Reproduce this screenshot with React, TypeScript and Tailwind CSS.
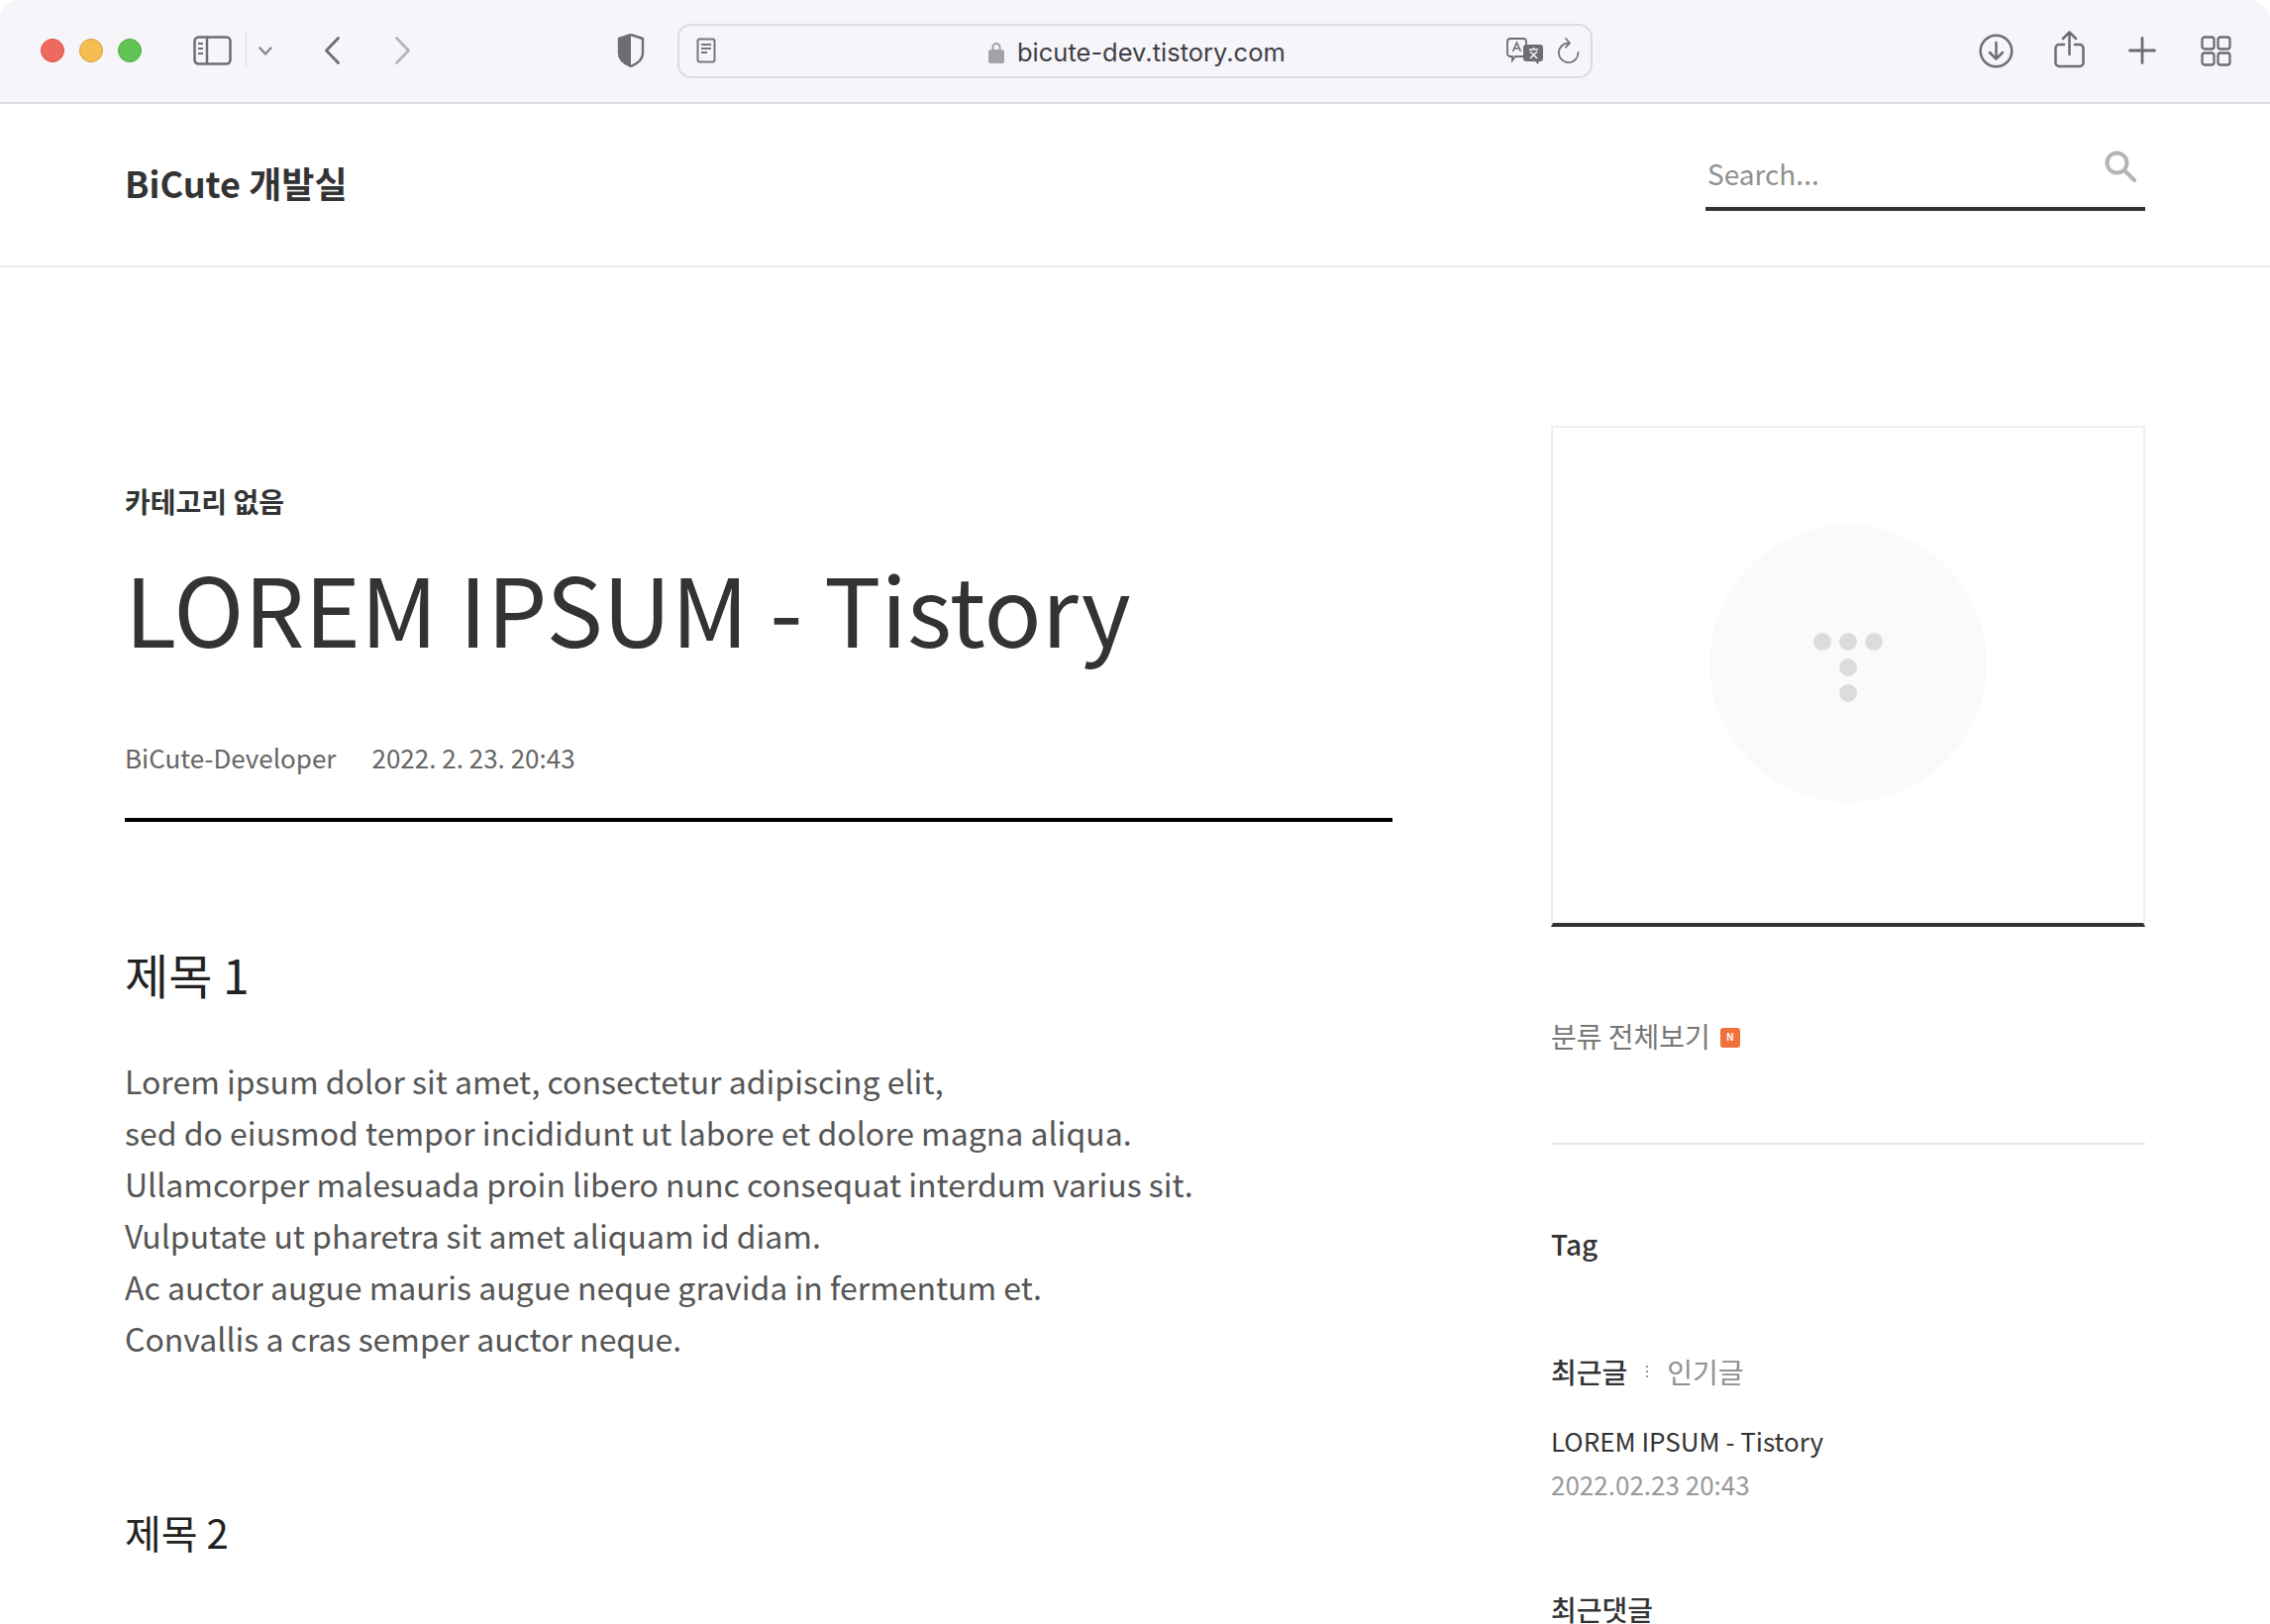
const kr = "font-['Noto_Sans_CJK_KR','Noto_Sans',sans-serif]";

function Toolbar() {
  return (
    <div className="relative flex h-[105px] shrink-0 items-center rounded-t-[20px] border-b-2 border-[#dcdbde] bg-[#f6f5fa] pb-[1px] pl-[41px] pr-[39px]">
      <div className="flex gap-[15px]">
        <span className="h-[24px] w-[24px] rounded-full border border-[#d9534a] bg-[#ee6a5f]" />
        <span className="h-[24px] w-[24px] rounded-full border border-[#dba13a] bg-[#f5bd4f]" />
        <span className="h-[24px] w-[24px] rounded-full border border-[#4fae43] bg-[#61c454]" />
      </div>
      <svg className="ml-[52px]" width="39" height="30" viewBox="0 0 39 30" fill="none" stroke="#6e6d72" strokeWidth="2.5">
        <rect x="1.5" y="1.5" width="36" height="27" rx="4" />
        <path d="M14 2v26" />
        <path d="M5 8h5M5 13h5M5 18h5" strokeWidth="2" stroke="#6e6d72" />
      </svg>
      <span className="ml-[14px] h-[36px] w-[1px] bg-[#dedde2]" />
      <svg className="ml-[12px]" width="14" height="9" viewBox="0 0 14 9" fill="none" stroke="#8a898e" strokeWidth="2.4" strokeLinecap="round" strokeLinejoin="round">
        <path d="M1.5 1.5 7 7.5l5.5-6" />
      </svg>
      <svg className="ml-[53px]" width="15" height="28" viewBox="0 0 15 28" fill="none" stroke="#6e6d72" strokeWidth="2.8" strokeLinecap="round" strokeLinejoin="round">
        <path d="M13.5 1.5 1.5 14l12 12.5" />
      </svg>
      <svg className="ml-[56px]" width="15" height="28" viewBox="0 0 15 28" fill="none" stroke="#b6b5ba" strokeWidth="2.8" strokeLinecap="round" strokeLinejoin="round">
        <path d="M1.5 1.5 13.5 14l-12 12.5" />
      </svg>
      <svg className="ml-[209px]" width="28" height="34" viewBox="0 0 28 34" fill="none">
        <path d="M14 1 2 5v15c0 6 6 10.500 12 13 6-2.500 12-7 12-13V5z" fill="#f6f5fa" stroke="#6e6d72" strokeWidth="2.4" strokeLinejoin="round" />
        <path d="M14 1 2 5v15c0 6 6 10.500 12 13z" fill="#6e6d72" />
      </svg>
      <div className="ml-[33px] flex h-[55px] w-[924px] items-center rounded-[14px] border-2 border-[#dcdbe0] pl-[17px] pr-[11px]">
        <svg width="20" height="26" viewBox="0 0 20 26" fill="none" stroke="#77767b" strokeWidth="2">
          <rect x="1.500" y="1.500" width="17" height="23" rx="2" />
          <path d="M5 7h10M5 11h10M5 15h6" />
        </svg>
        <div className="ml-[275px] flex items-center gap-[13px] pt-[3px]">
          <svg width="16" height="23" viewBox="0 0 16 23" fill="#a3a2a7">
            <path d="M3.500 10V6.500a4.500 4.500 0 0 1 9 0V10h-2V6.500a2.500 2.500 0 0 0-5 0V10z" />
            <rect x="0" y="9" width="16" height="14" rx="2.500" />
          </svg>
          <span className="font-['Inter',sans-serif] text-[25.5px] leading-[30px] text-[#3f3f42]">bicute-dev.tistory.com</span>
        </div>
        <svg className="ml-auto" width="37" height="27" viewBox="0 0 37 27" fill="none">
          <path d="M4 1h13a3 3 0 0 1 3 3v12a3 3 0 0 1-3 3H9l-3 4v-4H4a3 3 0 0 1-3-3V4a3 3 0 0 1 3-3z" stroke="#6e6d72" strokeWidth="1.800" />
          <path d="M6.500 14 10.500 5l4 9M8 11h5" stroke="#6e6d72" strokeWidth="1.600" />
          <path d="M20 7h14a3 3 0 0 1 3 3v11a3 3 0 0 1-3 3h-1l-1 3-3-3h-9a3 3 0 0 1-3-3V10a3 3 0 0 1 3-3z" fill="#6e6d72" />
          <path d="M23 12h9M27.500 10v2M24 21l7-7M24 14l7 7" stroke="#f6f5fa" strokeWidth="1.500" />
        </svg>
        <svg className="ml-[14px]" width="23" height="26" viewBox="0 0 23 26" fill="none" stroke="#77767b" strokeWidth="1.800" strokeLinecap="round" strokeLinejoin="round">
          <path d="M12 5.500A9.800 9.800 0 1 0 21.500 15M9 1l4 4.500-4 4" />
        </svg>
      </div>
      <div className="ml-auto flex items-center">
        <svg width="35" height="35" viewBox="0 0 35 35" fill="none" stroke="#6e6d72" strokeWidth="2.500" strokeLinecap="round" strokeLinejoin="round">
          <circle cx="17.500" cy="17.500" r="15.800" />
          <path d="M17.500 9v16M11 19l6.500 6.500L24 19" />
        </svg>
        <svg className="ml-[41px] -mt-[3px]" width="31" height="38" viewBox="0 0 31 38" fill="none" stroke="#6e6d72" strokeWidth="2.500" strokeLinecap="round" strokeLinejoin="round">
          <path d="M15.500 24V2M9 8l6.500-6.500L22 8" />
          <path d="M10 14H5a3.500 3.500 0 0 0-3.500 3.500v15A3.500 3.500 0 0 0 5 36h21a3.500 3.500 0 0 0 3.500-3.500v-15A3.500 3.500 0 0 0 26 14h-5" />
        </svg>
        <svg className="ml-[44px]" width="28" height="28" viewBox="0 0 28 28" fill="none" stroke="#6e6d72" strokeWidth="2.800" strokeLinecap="round">
          <path d="M14 1.500v25M1.500 14h25" />
        </svg>
        <svg className="ml-[45px]" width="31" height="31" viewBox="0 0 31 31" fill="none" stroke="#6e6d72" strokeWidth="2.300">
          <rect x="1.500" y="1.500" width="12" height="12" rx="2.500" />
          <rect x="17.500" y="1.500" width="12" height="12" rx="2.500" />
          <rect x="1.500" y="17.500" width="12" height="12" rx="2.500" />
          <rect x="17.500" y="17.500" width="12" height="12" rx="2.500" />
        </svg>
      </div>
    </div>
  );
}

function SiteHeader() {
  return (
    <header className="flex h-[165px] shrink-0 items-start justify-between border-b-2 border-[#eeeeee] px-[126px]">
      <h1 className="mt-[54px] text-[36px] font-bold leading-[50px] text-[#333333]">BiCute 개발실</h1>
      <div className="relative mt-[28px] flex h-[80px] w-[444px] items-center border-b-4 border-[#333333] pl-[2px] pt-[8px]">
        <span className="text-[28px] font-normal text-[#909090]">Search...</span>
        <svg className="absolute right-[9px] top-[19px]" width="32" height="32" viewBox="0 0 32 32" fill="none" stroke="#b4b4b4" strokeWidth="4" strokeLinecap="round">
          <circle cx="12.500" cy="12.500" r="10" />
          <path d="M20 20l10 10" />
        </svg>
      </div>
    </header>
  );
}

function Article() {
  const lines = [
    "Lorem ipsum dolor sit amet, consectetur adipiscing elit,",
    "sed do eiusmod tempor incididunt ut labore et dolore magna aliqua.",
    "Ullamcorper malesuada proin libero nunc consequat interdum varius sit.",
    "Vulputate ut pharetra sit amet aliquam id diam.",
    "Ac auctor augue mauris augue neque gravida in fermentum et.",
    "Convallis a cras semper auctor neque.",
  ];
  return (
    <main className="w-[1280px] pt-[216px]">
      <p className="text-[28px] font-bold leading-[40px] text-[#333333]">카테고리 없음</p>
      <h2 className="mt-[17px] text-[96px] font-normal leading-[140px] text-[#333333]">LOREM IPSUM - Tistory</h2>
      <div className="mt-[62px] flex gap-[36px] border-b-4 border-black pb-[41px] text-[26px] font-normal leading-[40px] text-[#666666]">
        <span>BiCute-Developer</span>
        <span>2022. 2. 23. 20:43</span>
      </div>
      <h3 className="mt-[118px] text-[48px] font-normal leading-[70px] text-[#222222]">제목 1</h3>
      <div className="mt-[47px] text-[32px] font-normal leading-[52px] text-[#555555]">
        {lines.map((line) => (
          <p key={line}>{line}</p>
        ))}
      </div>
      <h3 className="mt-[140px] text-[40px] font-normal leading-[60px] text-[#222222]">제목 2</h3>
      <p className="mt-[50px] text-[32px] font-normal leading-[52px] text-[#555555]">{lines[0]}</p>
    </main>
  );
}

function Sidebar() {
  return (
    <aside className="w-[600px] pt-[160px]">
      <div className="flex h-[506px] justify-center border-x-2 border-t-2 border-b-4 border-x-[#eeeeee] border-t-[#eeeeee] border-b-[#333333] pt-[98px]">
        <div className="flex h-[280px] w-[280px] flex-col items-center rounded-full bg-[#fafafa] pt-[109px]">
          <div className="flex gap-[8px]">
            <span className="h-[18px] w-[18px] rounded-full bg-[#dcdcdc]" />
            <span className="h-[18px] w-[18px] rounded-full bg-[#dcdcdc]" />
            <span className="h-[18px] w-[18px] rounded-full bg-[#dcdcdc]" />
          </div>
          <span className="mt-[8px] h-[18px] w-[18px] rounded-full bg-[#dcdcdc]" />
          <span className="mt-[8px] h-[18px] w-[18px] rounded-full bg-[#dcdcdc]" />
        </div>
      </div>
      <div className="flex h-[220px] items-start border-b-2 border-[#e8e8e8] pt-[91px]">
        <span className="text-[28px] font-normal leading-[38px] text-[#777777]">분류 전체보기</span>
        <span className="ml-[10px] mt-[11px] flex h-[20px] w-[20px] items-center justify-center rounded-[3px] bg-[#f0723b] font-['Liberation_Sans',sans-serif] text-[10px] font-bold leading-none text-white">N</span>
      </div>
      <p className="mt-[80px] text-[28px] font-medium leading-[40px] text-[#333333]">Tag</p>
      <div className="mt-[89px] flex items-center text-[28px] leading-[40px]">
        <span className="font-medium text-[#333333]">최근글</span>
        <span className="ml-[19px] flex flex-col gap-[3px]">
          <i className="h-[2px] w-[2px] bg-[#999999]" />
          <i className="h-[2px] w-[2px] bg-[#999999]" />
          <i className="h-[2px] w-[2px] bg-[#999999]" />
        </span>
        <span className="ml-[19px] font-normal text-[#909090]">인기글</span>
      </div>
      <p className="mt-[30px] text-[26px] font-normal leading-[40px] text-[#333333]">LOREM IPSUM - Tistory</p>
      <p className="mt-[4px] text-[26px] font-normal leading-[40px] text-[#999999]">2022.02.23 20:43</p>
      <p className="mt-[86px] text-[28px] font-medium leading-[40px] text-[#333333]">최근댓글</p>
    </aside>
  );
}

export default function App() {
  return (
    <div className={`flex h-[1640px] w-[2292px] flex-col overflow-hidden bg-white ${kr}`}>
      <Toolbar />
      <SiteHeader />
      <div className="flex justify-between pl-[126px] pr-[126px]">
        <Article />
        <Sidebar />
      </div>
    </div>
  );
}
